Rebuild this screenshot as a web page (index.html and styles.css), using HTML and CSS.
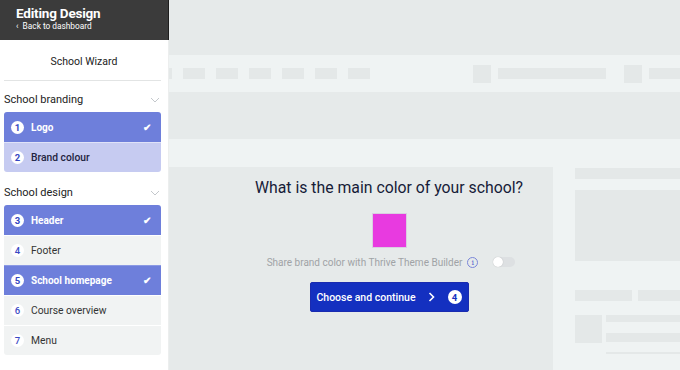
FILE: index.html
```html
<!DOCTYPE html>
<html>
<head>
<meta charset="utf-8">
<link rel="stylesheet" href="styles.css">
</head>
<body>
<div class="app">
  <aside class="sidebar">
    <div class="topbar">
      <div class="title">Editing Design</div>
      <div class="back">&lsaquo;&nbsp; Back to dashboard</div>
    </div>
    <div class="wizard">School Wizard</div>
    <div class="divider"></div>
    <div class="section-head"><span>School branding</span><svg class="chev" width="10" height="6" viewBox="0 0 10 6"><path d="M1 1l4 4 4-4" fill="none" stroke="#c4c8cc" stroke-width="1"/></svg></div>
    <div class="group">
      <div class="item done"><span class="num">1</span><span class="label">Logo</span><span class="check">&#10004;</span></div>
      <div class="item current"><span class="num">2</span><span class="label">Brand colour</span></div>
    </div>
    <div class="section-head"><span>School design</span><svg class="chev" width="10" height="6" viewBox="0 0 10 6"><path d="M1 1l4 4 4-4" fill="none" stroke="#c4c8cc" stroke-width="1"/></svg></div>
    <div class="group">
      <div class="item done"><span class="num">3</span><span class="label">Header</span><span class="check">&#10004;</span></div>
      <div class="item todo"><span class="num">4</span><span class="label">Footer</span></div>
      <div class="item done"><span class="num">5</span><span class="label">School homepage</span><span class="check">&#10004;</span></div>
      <div class="item todo"><span class="num">6</span><span class="label">Course overview</span></div>
      <div class="item todo"><span class="num">7</span><span class="label">Menu</span></div>
    </div>
  </aside>
  <main class="canvas">
    <div class="top-space"></div>
    <div class="band nav-band">
      <div class="nav-left">
        <span class="ph stub"></span><span class="ph nav"></span><span class="ph nav"></span><span class="ph nav"></span><span class="ph nav"></span><span class="ph nav"></span><span class="ph nav"></span>
      </div>
      <div class="nav-right">
        <span class="ph sq"></span><span class="ph longbar"></span><span class="ph sq sq2"></span><span class="ph tailbar"></span>
      </div>
    </div>
    <div class="mid-space"></div>
    <div class="band thin-band"></div>
    <div class="lower">
      <section class="modal">
        <h1 class="question">What is the main color of your school?</h1>
        <div class="swatch"></div>
        <div class="share">
          <span>Share brand color with Thrive Theme Builder</span>
          <span class="info">i</span>
          <span class="toggle"><span class="knob"></span></span>
        </div>
        <button class="cta">Choose and continue <svg class="arrow" width="7" height="10" viewBox="0 0 7 10"><path d="M1.5 1l4 4-4 4" fill="none" stroke="#fff" stroke-width="1.6"/></svg><span class="step">4</span></button>
      </section>
      <div class="side-preview">
        <div class="ph sp-bar"></div>
        <div class="ph sp-block"></div>
        <div class="sp-row">
          <div class="ph sp-half"></div><div class="ph sp-half2"></div>
        </div>
        <div class="sp-media">
          <div class="ph sp-thumb"></div>
          <div class="sp-lines">
            <div class="ph sp-l1"></div>
            <div class="ph sp-l2"></div>
            <div class="ph sp-l3"></div>
          </div>
        </div>
      </div>
    </div>
  </main>
</div>
</body>
</html>
```
FILE: styles.css
```css
* { box-sizing: border-box; }
html, body { margin: 0; padding: 0; }
body {
  width: 680px;
  height: 370px;
  overflow: hidden;
  font-family: Roboto, "Liberation Sans", Arial, sans-serif;
  background: #fff;
}
.app { display: flex; height: 370px; }

.sidebar {
  width: 169px;
  flex: none;
  background: #fff;
  border-right: 1px solid #eceeee;
}
.topbar {
  height: 40px;
  background: #3b3b3b;
  border-right: 1px solid #1e1e1e;
  margin-right: -1px;
  padding: 5px 0 0 16px;
  color: #fff;
}
.title { font-size: 13.5px; font-weight: 700; line-height: 17px; letter-spacing: -0.2px; }
.back { font-size: 8.3px; line-height: 11px; margin-top: -1px; }
.wizard {
  text-align: center;
  font-size: 10.5px;
  color: #222;
  padding-top: 15px;
  height: 40px;
}
.divider { height: 1px; background: #e2e4e4; margin: 0 7px 0 4px; }
.section-head {
  display: flex;
  justify-content: space-between;
  align-items: center;
  font-size: 11px;
  color: #222;
  padding: 5px 8px 0 4px;
  height: 31px;
}
.section-head .chev { margin-top: 2px; }
.group {
  margin: 0 7px 0 4px;
  border-radius: 3px;
  overflow: hidden;
}
.group + .section-head { padding-top: 7px; height: 33px; }
.item {
  height: 30px;
  display: flex;
  align-items: center;
  padding: 0 10px 0 7px;
  font-size: 10.3px;
  border-top: 1px solid #fff;
}
.item:first-child { border-top: none; height: 30px; }
.num {
  width: 13px;
  height: 13px;
  border-radius: 50%;
  background: #fff;
  display: inline-flex;
  align-items: center;
  justify-content: center;
  font-size: 9.5px;
  font-weight: 500;
  color: #2d3bb5;
  margin-right: 7px;
}
.label { flex: 1; }
.check { font-size: 10px; color: #fff; }
.done { background: #6e7fdb; color: #fff; font-weight: 700; border-top-color: #8b99e4; }
.done .label { font-size: 10px; }
.done .num { color: #3546c2; font-weight: 700; }
.current { background: #c6cbf1; color: #1f2340; font-weight: 500; border-top-color: #dfe2f8; }
.current .num { color: #3546c2; font-weight: 700; }
.todo { background: #f1f3f3; color: #333; border-top-color: #fff; }
.todo .num { color: #3a49c4; }

.canvas {
  flex: 1;
  display: flex;
  flex-direction: column;
  background: #e6eaea;
  min-width: 0;
}
.top-space { height: 55px; }
.band { background: #eff3f3; }
.nav-band {
  height: 37px;
  display: flex;
  align-items: center;
}
.ph { background: #e4e8e8; display: block; }
.nav-left { display: flex; gap: 11px; width: 304px; }
.nav-left .stub { width: 3px; height: 11px; }
.nav-left .nav { width: 22px; height: 11px; }
.nav-right { display: flex; align-items: center; flex: 1; }
.sq { width: 18px; height: 18px; }
.longbar { width: 108px; height: 11px; margin-left: 7px; }
.sq2 { margin-left: 18px; }
.tailbar { flex: 1; height: 11px; margin-left: 7px; }
.mid-space { height: 47px; }
.thin-band { height: 28px; }
.lower { flex: 1; display: flex; }
.modal {
  width: 382px;
  flex: none;
  display: flex;
  flex-direction: column;
  align-items: center;
  padding: 11px 0 0 58px;
}
.question {
  margin: 0;
  font-size: 15.8px;
  font-weight: 400;
  color: #161c38;
  line-height: 20px;
  white-space: nowrap;
}
.swatch {
  width: 35px;
  height: 35px;
  background: #e83ae0;
  border: 1px solid #d9cfe0;
  margin-top: 15px;
}
.share {
  display: flex;
  align-items: center;
  margin-top: 7px;
  font-size: 10px;
  color: #a0a3a6;
  height: 14px;
  margin-left: 4px;
  white-space: nowrap;
}
.info {
  width: 11px;
  height: 11px;
  border: 1px solid #7a86d9;
  border-radius: 50%;
  color: #5b69cf;
  font-size: 8px;
  line-height: 9px;
  text-align: center;
  margin-left: 5px;
  font-family: "DejaVu Serif", serif;
}
.toggle {
  width: 22px;
  height: 10px;
  background: #dde0e2;
  border-radius: 5px;
  margin-left: 15px;
  position: relative;
}
.knob {
  position: absolute;
  left: 0;
  top: 0;
  width: 10px;
  height: 10px;
  border-radius: 50%;
  background: #fff;
  box-shadow: 0 0 1px rgba(0,0,0,0.25);
}
.cta {
  margin-top: 13px;
  width: 159px;
  height: 30px;
  background: #1430c0;
  border: 1px solid #1a2bb0;
  border-radius: 2px;
  color: #fff;
  font-family: inherit;
  font-size: 10.5px;
  font-weight: 500;
  display: flex;
  align-items: center;
  justify-content: center;
  padding: 0;
}
.arrow { margin-left: 12px; }
.step {
  width: 14px;
  height: 14px;
  border-radius: 50%;
  background: #fff;
  color: #1430c0;
  font-size: 9.5px;
  font-weight: 700;
  display: inline-flex;
  align-items: center;
  justify-content: center;
  margin-left: 13px;
}
.side-preview {
  flex: 1;
  background: #eff3f3;
  border-left: 2px solid #e6eaea;
  padding: 1px 0 0 22px;
  display: flex;
  flex-direction: column;
}
.sp-bar { height: 11px; }
.sp-block { height: 71px; margin-top: 11px; }
.sp-row { display: flex; gap: 6px; margin-top: 29px; }
.sp-half { width: 57px; height: 11px; }
.sp-half2 { flex: 1; height: 11px; }
.sp-media { display: flex; gap: 4px; margin-top: 14px; }
.sp-thumb { width: 27px; height: 28px; }
.sp-lines { flex: 1; display: flex; flex-direction: column; }
.sp-l1 { height: 7px; }
.sp-l2 { height: 9px; margin-top: 11px; }
.sp-l3 { height: 2px; margin-top: 10px; }
```
